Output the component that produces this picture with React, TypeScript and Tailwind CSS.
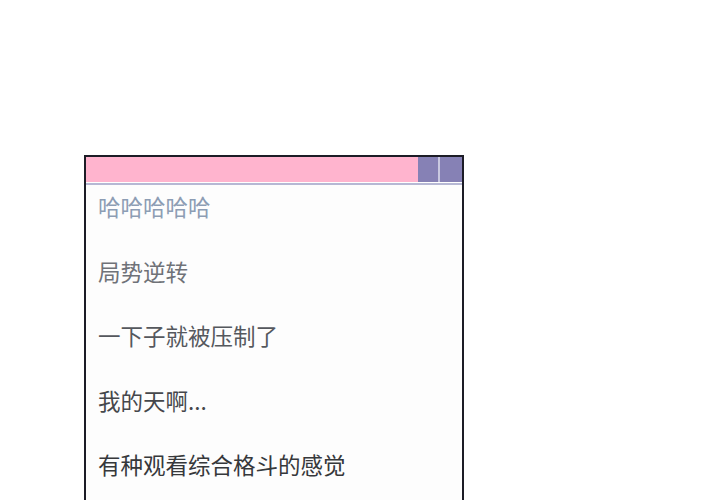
const lines = [
  { text: '哈哈哈哈哈', color: 'text-[#8d9db4]' },
  { text: '局势逆转', color: 'text-[#6f7278]' },
  { text: '一下子就被压制了', color: 'text-[#55585d]' },
  { text: '我的天啊...', color: 'text-[#45474b]' },
  { text: '有种观看综合格斗的感觉', color: 'text-[#36383b]' },
];

export default function App() {
  return (
    <div className="h-[500px] w-[720px] overflow-hidden bg-white pl-[84px] pt-[155px]">
      <div className="h-[400px] w-[380px] border-2 border-b-0 border-[#1c1c26] bg-[#fdfdfd]">
        <div className="flex h-[25px]">
          <div className="flex-1 bg-[#ffb4ce]" />
          <div className="w-[20px] bg-[#8681b5]" />
          <div className="w-[2px] bg-[#c9c8e0]" />
          <div className="w-[22px] bg-[#8681b5]" />
        </div>
        <div className="h-px bg-white" />
        <div className="h-[2px] bg-[#b6b8d4]" />
        <div
          className="flex flex-col gap-[42px] pl-[12px] pt-[10px] text-[22.5px] leading-[22.5px]"
          style={{ fontFamily: '"Noto Sans CJK SC", "Noto Sans", sans-serif' }}
        >
          {lines.map((l) => (
            <p key={l.text} className={l.color}>
              {l.text}
            </p>
          ))}
        </div>
      </div>
    </div>
  );
}
